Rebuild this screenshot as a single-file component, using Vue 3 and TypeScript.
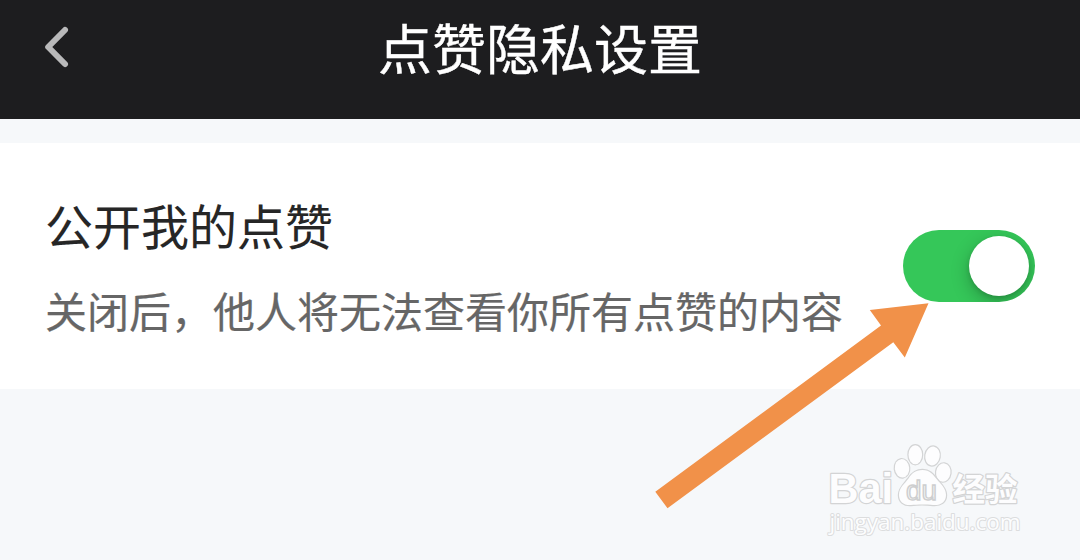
<script setup lang="ts">
import { ref } from 'vue'

const isPublic = ref<boolean>(true)
const title = '点赞隐私设置'
const label = '公开我的点赞'
const hint = '关闭后，他人将无法查看你所有点赞的内容'
</script>

<template>
  <div class="screen">
    <header class="bar">
      <button class="back" aria-label="返回">
        <svg width="32" height="48" viewBox="0 0 32 48">
          <path d="M25 6.2 8.2 23.2 25 40.2" />
        </svg>
      </button>
      <h1 class="title">{{ title }}</h1>
      <span class="spacer"></span>
    </header>

    <main class="card">
      <div class="copy">
        <p class="label">{{ label }}</p>
        <p class="hint">{{ hint }}</p>
      </div>
      <button
        class="switch"
        :class="{ on: isPublic }"
        role="switch"
        :aria-checked="isPublic"
        @click="isPublic = !isPublic"
      >
        <span class="knob"></span>
      </button>
    </main>

    <svg class="arrow" width="274" height="206" viewBox="655 303 274 206">
      <path d="M928.5 303.3 869.8 310 881 325.5 655.3 491.7 667.5 508.2 893.3 342.3 904.8 357.5Z" />
    </svg>

    <svg class="watermark" width="230" height="120" viewBox="0 0 230 120">
      <g class="mark">
        <text class="latin" x="18.5" y="73.3" font-size="42" textLength="64.5" lengthAdjust="spacingAndGlyphs">Bai</text>
        <ellipse cx="92" cy="38.3" rx="7.2" ry="9.2" transform="rotate(-6 92 38.3)" />
        <ellipse cx="105.3" cy="24.7" rx="6.8" ry="9.5" />
        <ellipse cx="122.5" cy="26" rx="7.2" ry="9.5" transform="rotate(10 122.5 26)" />
        <ellipse cx="133.3" cy="42.5" rx="7.2" ry="9.2" transform="rotate(8 133.3 42.5)" />
        <path d="M112.500 40C105 40 101.500 44 98.500 48.500C95 53.500 89 57.500 89 65C89 72 94 75.500 101 75C107 74.300 117 74.300 123 75C131 75.500 136 72 136 65C136 58 130.500 54 127 49.500C123 44.500 120 40 112.500 40Z" />
        <text class="han" x="142.500" y="71" font-size="32" textLength="65" lengthAdjust="spacingAndGlyphs">经验</text>
      </g>
      <text class="du" x="96" y="70" font-size="27" textLength="31" lengthAdjust="spacingAndGlyphs">du</text>
      <text class="url" x="19.500" y="100" font-size="21.500" textLength="191" lengthAdjust="spacingAndGlyphs">jingyan.baidu.com</text>
    </svg>
  </div>
</template>

<style>
body {
  margin: 0;
  background: #f6f8fa;
}
</style>

<style scoped>
.screen {
  position: relative;
  width: 1080px;
  height: 560px;
  overflow: hidden;
  background: #f6f8fa;
  font-family: "Noto Sans CJK SC", sans-serif;
}
.bar {
  box-sizing: border-box;
  height: 119px;
  padding: 0 40px 25px;
  display: flex;
  align-items: center;
  justify-content: space-between;
  background: #1d1d1f;
}
.back {
  width: 32px;
  height: 48px;
  padding: 0;
  border: 0;
  background: none;
}
.back svg {
  display: block;
}
.back path {
  fill: none;
  stroke: #b9b9ba;
  stroke-width: 6;
  stroke-linecap: round;
  stroke-linejoin: round;
  transform: translateY(0.8px);
}
.spacer {
  width: 32px;
}
.title {
  margin: 0;
  font-size: 54px;
  line-height: 80px;
  font-weight: 400;
  color: #fff;
  -webkit-text-stroke: 0.4px #fff;
}
.card {
  box-sizing: border-box;
  height: 246px;
  margin-top: 24px;
  padding: 0 45px;
  display: flex;
  align-items: center;
  justify-content: space-between;
  background: #fff;
}
.copy {
  padding-bottom: 4px;
  white-space: nowrap;
}
.label {
  margin: 0;
  font-size: 48px;
  line-height: 72px;
  color: #262626;
  -webkit-text-stroke: 0.1px #262626;
}
.hint {
  margin: 18px 0 0;
  font-size: 42px;
  line-height: 63px;
  color: #666;
  -webkit-text-stroke: 0.2px #666;
}
.switch {
  box-sizing: border-box;
  width: 132px;
  height: 72px;
  padding: 6px;
  border: 0;
  border-radius: 36px;
  display: flex;
  background: #d8d8dc;
  overflow: hidden;
}
.switch.on {
  justify-content: flex-end;
  background: #35c759;
}
.knob {
  width: 60px;
  height: 60px;
  border-radius: 50%;
  background: #fff;
  box-shadow: 0 6px 18px rgba(0, 0, 0, 0.25), 0 2px 4px rgba(0, 0, 0, 0.12);
}
.arrow {
  position: absolute;
  left: 655px;
  top: 303px;
  pointer-events: none;
}
.arrow path {
  fill: #f19149;
}
.watermark {
  position: absolute;
  left: 810px;
  top: 430px;
  pointer-events: none;
}
.mark {
  fill: #fdfdfe;
  stroke: #d3d4d5;
  stroke-width: 2.4;
  stroke-linejoin: round;
  paint-order: stroke;
}
.latin {
  font-family: "Liberation Sans", Arial, sans-serif;
  font-weight: 700;
}
.du {
  font-family: "Liberation Sans", Arial, sans-serif;
  fill: #f5f6f7;
  stroke: #cdcecf;
  stroke-width: 1.4;
}
.han {
  font-family: "Noto Sans CJK SC", sans-serif;
  font-weight: 700;
}
.url {
  font-family: "Open Sans", sans-serif;
  fill: #fdfdfe;
  stroke: #dcddde;
  stroke-width: 2;
  stroke-linejoin: round;
  paint-order: stroke;
}
</style>
